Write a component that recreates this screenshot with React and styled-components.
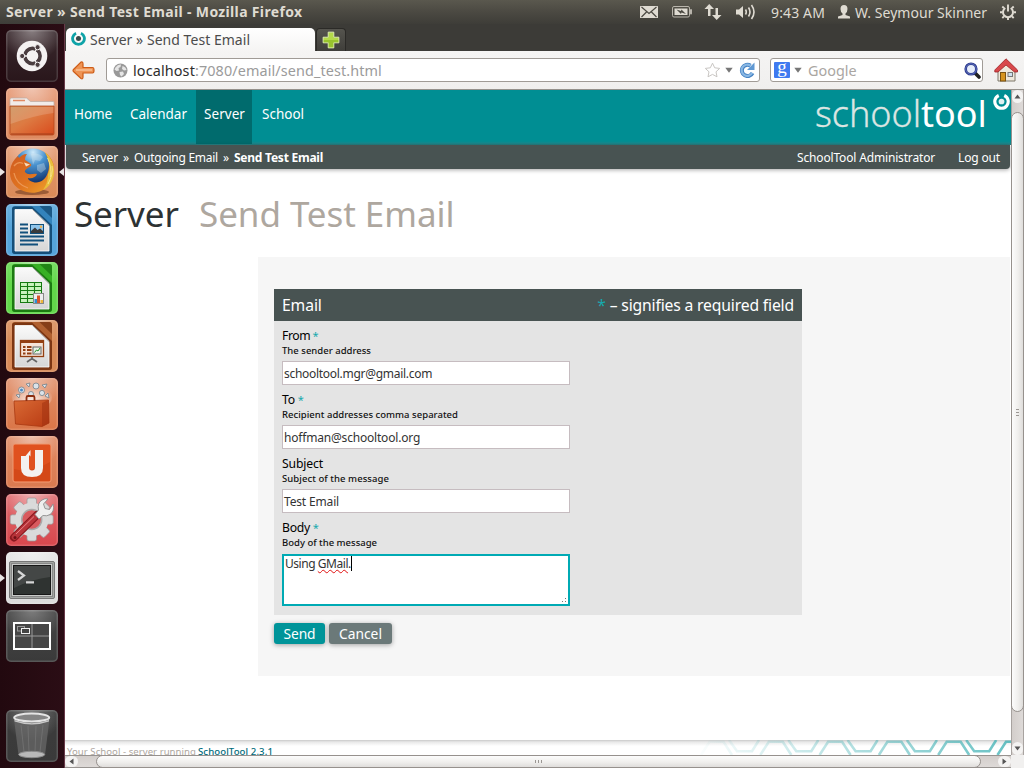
import React from "react";
import styled, { createGlobalStyle, css } from "styled-components";

const Global = createGlobalStyle`
  *, *::before, *::after { box-sizing: border-box; }
  html, body { margin: 0; padding: 0; }
  body { width: 1024px; height: 768px; overflow: hidden; background: #fff; }
  svg { display: block; flex: none; }
`;

const tracked = css`
  letter-spacing: ${(p) => p.$track || 0}px;
  white-space: pre;
`;

const Desktop = styled.div`
  width: 1024px;
  height: 768px;
  display: flex;
  flex-direction: column;
  overflow: hidden;
  background: #250a11;
  font-family: "Noto Sans", "Open Sans", sans-serif;
  font-size: 14px;
`;

/* ---------- Top panel ---------- */
const Panel = styled.header`
  height: 24px;
  flex: none;
  display: flex;
  align-items: center;
  padding: 0 8px 0 6px;
  background: linear-gradient(#5a584e, #4b4942 50%, #3e3d38);
  color: #dfdbd2;
`;
const PanelTitle = styled.span`
  ${tracked}
  flex: 1;
  line-height: 24px;
  font-size: 14px;
  font-weight: 700;
`;
const Indicators = styled.div`
  display: flex;
  align-items: center;
  height: 24px;
`;
const Clock = styled.span`
  ${tracked}
  width: 55px;
  margin-left: 15px;
  font-size: 14px;
`;
const UserName = styled.span`
  ${tracked}
  width: 133px;
  margin: 0 12px 0 4px;
  font-size: 14px;
`;
const Spacer = styled.i`
  width: ${(p) => p.$w}px;
  flex: none;
`;

/* ---------- Launcher ---------- */
const Workspace = styled.div`
  flex: 1;
  display: flex;
  min-height: 0;
`;
const Launcher = styled.nav`
  width: 65px;
  flex: none;
  display: flex;
  flex-direction: column;
  gap: 6px;
  padding: 6px 0 6px 0;
  background: linear-gradient(90deg, #22090f, #2b0d15);
  border-right: 1px solid #683948;
`;
const LauncherItem = styled.div`
  height: 52px;
  display: flex;
  align-items: center;
  margin-top: ${(p) => (p.$last ? "auto" : 0)};
`;
const Pip = styled.i`
  width: 0;
  height: 0;
  border: 4px solid transparent;
  ${(p) =>
    p.$side === "left"
      ? "border-left: 5px solid #e8e4e4; border-right: 0; margin-right: 1px;"
      : "border-right: 5px solid #e8e4e4; border-left: 0; margin-left: 1px;"}
  visibility: ${(p) => (p.$on ? "visible" : "hidden")};
`;

/* ---------- Browser chrome ---------- */
const Browser = styled.main`
  flex: 1;
  min-width: 0;
  display: flex;
  flex-direction: column;
  background: #3c3b37;
`;
const TabStrip = styled.div`
  height: 27px;
  flex: none;
  display: flex;
  align-items: flex-end;
  gap: 1px;
  padding-left: 1px;
`;
const Tab = styled.div`
  width: 249px;
  height: 23px;
  display: flex;
  align-items: center;
  gap: 4px;
  padding-left: 5px;
  border-radius: 5px 5px 0 0;
  background: linear-gradient(#fff, #f5f4f3);
  color: #4c4c4c;
`;
const TabTitle = styled.span`
  ${tracked}
  font-size: 14px;
`;
const TabMark = styled.div`
  height: 18px;
`;
const NewTab = styled.div`
  width: 30px;
  height: 23px;
  display: grid;
  place-items: center;
  border: 1px solid #2b2a27;
  border-bottom: 0;
  border-radius: 4px 4px 0 0;
  background: linear-gradient(#55544e, #3f3e3a);
`;
const Toolbar = styled.div`
  height: 39px;
  flex: none;
  display: flex;
  align-items: center;
  padding: 0 6px 0 7px;
  background: linear-gradient(#f5f4f3, #f0efee);
  border-bottom: 1px solid #95918c;
`;
const Entry = styled.div`
  height: 24px;
  width: ${(p) => p.$w}px;
  display: flex;
  align-items: center;
  border: 1px solid #a09b96;
  border-radius: 3px;
  background: #fff;
  color: #9b9b9b;
  font-size: 14.4px;
`;
const UrlHost = styled.span`
  ${tracked}
  color: #2d2d2d;
`;
const UrlPath = styled.span`
  ${tracked}
  flex: 1;
`;
const Placeholder = styled.span`
  ${tracked}
  flex: 1;
  color: #aaa6a2;
`;

/* ---------- Viewport and scrollbars ---------- */
const Viewport = styled.div`
  flex: 1;
  min-height: 0;
  display: grid;
  grid-template: 665px 13px / 946px 13px;
  background: #f1f0ef;
`;
const VBar = styled.div`
  display: flex;
  flex-direction: column;
  align-items: stretch;
  border: 1px solid #a8a3a0;
  border-top: 0;
  border-bottom: 0;
  background: linear-gradient(90deg, #d3cecb, #dedad8);
`;
const HBar = styled.div`
  display: flex;
  border: 1px solid #979390;
  border-left: 0;
  border-right: 0;
  background: linear-gradient(#d3cecb, #dedad8);
`;
const VThumb = styled.div`
  height: 600px;
  margin: 9px -1px 0;
  display: grid;
  place-items: center;
  border: 1px solid #96918d;
  border-radius: 7px;
  background: linear-gradient(90deg, #fcfcfc, #f0efed 55%, #dfdddb);
`;
const HThumb = styled.div`
  width: 885px;
  margin: -1px 0 -1px 18px;
  display: grid;
  place-items: center;
  border: 1px solid #96918d;
  border-radius: 7px;
  background: linear-gradient(#fcfcfc, #f0efed 55%, #dfdddb);
`;
const Stepper = styled.div`
  width: ${(p) => (p.$v ? "auto" : "13px")};
  height: ${(p) => (p.$v ? "13px" : "auto")};
  margin: ${(p) => (p.$end ? (p.$v ? "auto 0 0" : "0 0 0 auto") : 0)};
  display: grid;
  place-items: center;
  background: #f4f3f2;
  border-radius: 6px;
`;

/* ---------- SchoolTool page ---------- */
const Page = styled.div`
  background: #fff;
  overflow: hidden;
  display: flex;
  flex-direction: column;
`;
const Banner = styled.div`
  height: 55px;
  flex: none;
  display: flex;
  background: linear-gradient(#008e93 0, #008e93 51px, #178a8f 53px, #2b7c80 55px);
  color: #fff;
`;
const NavItem = styled.a`
  width: ${(p) => p.$w}px;
  height: 54px;
  padding: 14px 0 0 ${(p) => p.$pad || 8}px;
  line-height: 20px;
  font-size: 13.5px;
  background: ${(p) => (p.$active ? "#006b6d" : "transparent")};
  ${tracked}
`;
const Brand = styled.div`
  margin-left: auto;
  display: flex;
  font-size: 36px;
  line-height: 48px;
`;
const BrandThin = styled.span`
  ${tracked}
  font-weight: 300;
  color: #dbe5e2;
  -webkit-text-stroke: 0.3px #dbe5e2;
`;
const BrandBold = styled.span`
  ${tracked}
  width: 68px;
  font-weight: 400;
`;
const BrandMark = styled.div`
  padding: 3px 1px 0 4px;
`;
const Crumbs = styled.div`
  height: 24px;
  flex: none;
  margin: 0 1px;
  padding: 0 10px 0 16px;
  display: flex;
  align-items: flex-start;
  border-radius: 0 0 4px 4px;
  background: #485352;
  box-shadow: 0 1px 4px rgba(0, 0, 0, 0.35);
  color: #fff;
  font-size: 12px;
`;
const Crumb = styled.span`
  ${tracked}
  width: ${(p) => p.$w}px;
  flex: none;
  line-height: 25px;
  font-weight: ${(p) => (p.$strong ? 700 : 400)};
  margin-left: ${(p) => (p.$push ? "auto" : 0)};
`;
const Heading = styled.h1`
  height: 88px;
  margin: 0;
  padding: 20px 0 0 9px;
  flex: none;
  display: flex;
  font-size: 35px;
  line-height: 50px;
  font-weight: 400;
`;
const HeadMain = styled.span`
  ${tracked}
  width: 125px;
  color: #2d3233;
`;
const HeadSub = styled.span`
  ${tracked}
  color: #aea79f;
`;
const Content = styled.section`
  height: 419px;
  flex: none;
  margin: 0 1px 0 193px;
  padding: 32px 16px;
  background: #f6f6f6;
`;
const Fieldset = styled.div`
  width: 528px;
  height: 326px;
  background: #e4e4e4;
`;
const Legend = styled.div`
  height: 32px;
  padding: 0 8px;
  display: flex;
  align-items: center;
  justify-content: space-between;
  background: #485352;
  color: #fff;
  font-size: 15.7px;
`;
const LegendText = styled.span`
  ${tracked}
`;
const Star = styled.b`
  font-weight: 400;
  font-size: ${(p) => (p.$small ? "11px" : "inherit")};
  color: #17a9ad;
`;
const Row = styled.div`
  height: 64px;
  padding: 7px 8px 0;
`;
const FieldName = styled.div`
  ${tracked}
  height: 16px;
  line-height: 16px;
  font-size: 12.2px;
  color: #000;
`;
const Hint = styled.div`
  ${tracked}
  height: 13px;
  line-height: 13px;
  font-size: 9.5px;
  font-weight: 500;
  color: #111;
`;
const Input = styled.div`
  width: 288px;
  height: 24px;
  margin-top: 4px;
  padding: 0 1px;
  border: 1px solid #c6bcc0;
  background: #fff;
  line-height: 22px;
  color: #333;
`;
const TextArea = styled.div`
  width: 288px;
  height: 52px;
  margin-top: 5px;
  padding: 0 1px;
  display: flex;
  border: 2px solid #00aab4;
  background: #fff;
  line-height: 16px;
  color: #333;
`;
const Value = styled.span`
  ${tracked}
  font-size: 12px;
`;
const Misspelt = styled.span`
  text-decoration: underline wavy #e01010 1px;
  text-underline-offset: 1px;
  text-decoration-skip-ink: none;
`;
const Caret = styled.i`
  width: 1px;
  height: 15px;
  background: #000;
`;
const Grip = styled.div`
  margin: auto 0 1px auto;
`;
const Buttons = styled.div`
  display: flex;
  gap: 4px;
  padding-top: 8px;
`;
const Button = styled.button`
  ${tracked}
  width: ${(p) => p.$w}px;
  height: 21px;
  padding: 0;
  border: 0;
  border-radius: 3px;
  background: ${(p) => (p.$primary ? "#009499" : "#6b7979")};
  box-shadow: 0 1px 5px rgba(0, 0, 0, 0.35);
  color: #fff;
  font: 400 13.8px/21px "Noto Sans", sans-serif;
`;
const Footer = styled.footer`
  height: 15px;
  flex: none;
  margin-top: auto;
  padding-left: 2px;
  display: flex;
  justify-content: space-between;
  overflow: hidden;
  background: linear-gradient(#c9c9c9, #e9e9e9 2px, #fff 6px);
  font-size: 9.6px;
  line-height: 24px;
  color: #aea79f;
`;
const FooterText = styled.span`
  ${tracked}
  width: 131px;
`;
const FooterLink = styled.a`
  ${tracked}
  flex: 1;
  color: #006b7c;
  font-weight: 500;
`;

/* ---------- Icons ---------- */
const Ring = ({ size, color, dot }) => (
  <svg width={size} height={size} viewBox="0 0 16 16">
    <path d="M5.400 2.300A6.300 6.300 0 1 0 10.600 2.300" fill="none" stroke={color} strokeWidth="3" />
    <circle cx="8" cy="8" r="2.700" fill={dot} />
  </svg>
);

const Tile = ({ id, from, to, glow = 0.45, children }) => (
  <svg width="52" height="52" viewBox="0 0 52 52">
    <defs>
      <linearGradient id={`t-${id}`} x1="0" y1="0" x2="0" y2="1">
        <stop offset="0" stopColor={from} />
        <stop offset="1" stopColor={to} />
      </linearGradient>
      <radialGradient id={`g-${id}`} cx=".5" cy="0" r=".6">
        <stop offset="0" stopColor="#fff" stopOpacity={glow} />
        <stop offset="1" stopColor="#fff" stopOpacity="0" />
      </radialGradient>
    </defs>
    <rect width="52" height="52" rx="5" fill={`url(#t-${id})`} />
    <rect width="52" height="52" rx="5" fill={`url(#g-${id})`} />
    <rect x=".75" y=".75" width="50.5" height="50.5" rx="4.5" fill="none" stroke="#fff" strokeOpacity=".15" strokeWidth="1.500" />
    {children}
  </svg>
);

const DashIcon = () => (
  <Tile id="dash" from="#3a2a2e" to="#29161b" glow={0.4}>
    <circle cx="26" cy="26" r="15.300" fill="#f4f2f2" />
    <circle cx="26.500" cy="26" r="7.600" fill="none" stroke="#4a3d40" strokeWidth="3.600" />
    <g stroke="#f4f2f2" strokeWidth="1.300">
      <path d="M26.500 26 16 26M26.500 26 31.700 17M26.500 26 31.700 35" />
    </g>
    <circle cx="26.500" cy="26" r="5.400" fill="#f4f2f2" />
    <g fill="#4a3d40" stroke="#f4f2f2" strokeWidth="1">
      <circle cx="16.200" cy="26" r="2.600" />
      <circle cx="31.600" cy="17.200" r="2.600" />
      <circle cx="31.600" cy="34.800" r="2.600" />
    </g>
  </Tile>
);

const FilesIcon = () => (
  <Tile id="files" from="#e59672" to="#de8a60">
    <defs>
      <linearGradient id="fold" x1="0" y1="0" x2="1" y2="1">
        <stop offset="0" stopColor="#c98b52" />
        <stop offset=".45" stopColor="#dd7a42" />
        <stop offset="1" stopColor="#d94a1c" />
      </linearGradient>
    </defs>
    <path d="M4 19V11.500Q4 10 5.500 10H20.500L24.500 13.500H47Q48 13.500 48 14.500V19Z" fill="#f1ece9" stroke="#b9aaa3" strokeWidth=".7" />
    <path d="M7 12.500H19" stroke="#e08a63" strokeWidth="1.500" />
    <path d="M4 18H48V45.500Q48 47 46.500 47H5.500Q4 47 4 45.500Z" fill="url(#fold)" stroke="#b4481d" strokeWidth=".8" />
    <path d="M4.500 19H47.500V25Q26 28 4.500 36Z" fill="#fff" opacity=".16" />
    <path d="M5 46H47" stroke="#a53f1a" />
  </Tile>
);

const FirefoxIcon = () => (
  <Tile id="ff" from="#e59a72" to="#d98a58">
    <defs>
      <radialGradient id="globe" cx=".5" cy=".1" r=".8">
        <stop offset="0" stopColor="#cfeafa" />
        <stop offset=".4" stopColor="#4a93cf" />
        <stop offset="1" stopColor="#0e2f6b" />
      </radialGradient>
      <linearGradient id="fox" x1="0" y1="0" x2="1" y2="1">
        <stop offset="0" stopColor="#cf5a20" />
        <stop offset=".55" stopColor="#e07420" />
        <stop offset="1" stopColor="#f0a82e" />
      </linearGradient>
    </defs>
    <ellipse cx="26" cy="46" rx="17" ry="3" fill="#5c2c12" opacity=".5" />
    <circle cx="27" cy="22" r="19.500" fill="url(#globe)" />
    <path d="M25 8Q32 6 37 11L34 15 29 14 27 19ZM31 19 38 17 40 23 35 27 31 24Z" fill="#dcebf2" opacity=".35" />
    <path d="M12 10C3 17 2 30 7 37C13 46 26 49 35 45C45 41 50 30 47.500 18C46 13 43 9 39 7C43 12 44 20 42 26C40 34 33 38 27 36C23 35 22 33 22 32C26 33 30 31 31 28C27 27 22 30 19 26C18 24 22 22 25 20C26 18 24 17 19 14C19 11 20 9 21 8C17 8 15 10 13 12Z" fill="url(#fox)" />
    <path d="M39 6Q50.500 16 47.500 31Q45 40 37 44Q42 37 42 28Q44 24 43 17Q42 11 39 6Z" fill="#e9bf3c" />
    <path d="M41.500 12Q46 20 44.500 31M46 20Q47.500 28 42 38" fill="none" stroke="#f8e78c" strokeWidth=".9" />
    <path d="M8 20Q12 15 17 17.500M8 27Q10 38 22 42" stroke="#f0a060" strokeWidth="1.300" fill="none" opacity=".8" />
    <path d="M18 16.500 24 18.500 20 20.500Z" fill="#f6dcc0" />
  </Tile>
);

const OfficeIcon = ({ id, light, mid, dark, children }) => (
  <Tile id={id} from={light} to={light}>
    <defs>
      <linearGradient id={`paper-${id}`} x1="0" y1="0" x2="0" y2="1">
        <stop offset="0" stopColor="#fafafa" />
        <stop offset="1" stopColor="#d6d6d6" />
      </linearGradient>
    </defs>
    <rect x="6" y="2" width="40" height="48" rx="3" fill={mid} />
    <path d="M9 2.500H26L46 21V47Q46 50 43 50H9Q6 50 6 47V5.500Q6 2.500 9 2.500Z" fill={dark} />
    <path d="M33.500 2H43.500Q46 2 46 4.500V14Z" fill={dark} opacity=".8" />
    <path d="M9 5.500H26.500L43 21.500V47H9Z" fill={`url(#paper-${id})`} stroke="#fff" strokeWidth=".8" />
    <path d="M26.500 5.500 43 21.500" stroke="#999" strokeWidth=".8" />
    {children}
  </Tile>
);

const WriterIcon = () => (
  <OfficeIcon id="wr" light="#55a4da" mid="#3383bc" dark="#154e78">
    <path d="M14 20.500H22M14 24.500H22M14 28.500H22M14 32.500H38M14 36.500H38M14 40.500H32" stroke="#12507c" strokeWidth="1.800" />
    <rect x="24.500" y="20.500" width="13" height="9" fill="#8fc4ea" stroke="#12507c" />
    <path d="M25 29V27L29 23.500 31.500 26 34 24.500 37 27V29Z" fill="#3a3a3a" />
    <circle cx="35" cy="22.800" r="1.200" fill="#f2b14a" />
  </OfficeIcon>
);
const CalcIcon = () => (
  <OfficeIcon id="ca" light="#62d84a" mid="#37b024" dark="#1c7a12">
    <rect x="14.500" y="20.500" width="21" height="20" fill="#c9f2bd" stroke="#167a12" />
    <path d="M14.500 24.500H35.500M14.500 28.500H35.500M14.500 32.500H35.500M14.500 36.500H35.500M21.500 20.500V40.500M28.500 20.500V40.500" stroke="#167a12" strokeWidth="1.100" />
    <rect x="27.500" y="31.500" width="10" height="10" fill="#eee" stroke="#888" />
    <path d="M28.500 37H31V41H28.500Z" fill="#2f8fd0" />
    <path d="M31 33.500H34V41H31Z" fill="#d8552c" />
    <path d="M34.500 38H37V41H34.500Z" fill="#efb73a" />
  </OfficeIcon>
);
const ImpressIcon = () => (
  <OfficeIcon id="im" light="#d88a57" mid="#b06030" dark="#7c3613">
    <rect x="14.500" y="20.500" width="23" height="16" fill="#f6e4d8" stroke="#933f12" strokeWidth="1.300" />
    <path d="M14 22H38" stroke="#933f12" strokeWidth="2" />
    <path d="M17 27H19.500M17 30H19.500M17 33.500H19.500M21 27H25.500M21 30H25.500M21 33.500H25.500" stroke="#933f12" strokeWidth="1.900" />
    <rect x="27" y="27" width="8" height="7" fill="#e9f2e6" stroke="#666" />
    <path d="M28.500 32.500 30.500 30 32 31 34 28" fill="none" stroke="#25902d" />
    <path d="M26 37V39M21 42 26 38.500 31 42" fill="none" stroke="#666" strokeWidth="1.800" />
  </OfficeIcon>
);

const SoftwareIcon = () => (
  <Tile id="sw" from="#e08f6a" to="#da7648">
    <defs>
      <radialGradient id="burst" cx=".5" cy=".7" r=".6">
        <stop offset="0" stopColor="#fff" stopOpacity=".95" />
        <stop offset="1" stopColor="#fff" stopOpacity="0" />
      </radialGradient>
      <linearGradient id="bag" x1="0" y1="0" x2="1" y2="1">
        <stop offset="0" stopColor="#d96a35" />
        <stop offset="1" stopColor="#b83a12" />
      </linearGradient>
    </defs>
    <ellipse cx="26" cy="19" rx="20" ry="13" fill="url(#burst)" />
    <g fill="#dbe3ea" stroke="#74818c" strokeWidth=".8">
      <circle cx="15.500" cy="12" r="3" />
      <circle cx="30" cy="8" r="3" />
      <circle cx="36" cy="15" r="2.600" />
      <circle cx="25" cy="16" r="2.500" />
      <path d="M20 6 24 5 23 9ZM36 7 41 6 39 10ZM10 17 14 16 13 20ZM39 18 42 15 43 20Z" />
    </g>
    <circle cx="15.500" cy="12" r="1.500" fill="#4b8bc4" />
    <path d="M8 23 42.500 22 43 45 36 48.500 9.500 46Z" fill="url(#bag)" stroke="#a83812" strokeWidth=".8" />
    <path d="M36 25V48.500L43 45 42.500 22Z" fill="#9d3010" opacity=".5" />
    <path d="M20.500 23V19.500Q20.500 18 22 18H27Q28.500 18 28.500 19.500V23" fill="none" stroke="#8d2e10" strokeWidth="1.800" />
  </Tile>
);

const UbuntuOneIcon = () => (
  <Tile id="u1" from="#e08a64" to="#da7a50">
    <rect x="7" y="8" width="38" height="38" rx="2" fill="#e0511f" stroke="#ef9a73" />
    <path d="M8 33Q24 38 44 26V45H8Z" fill="#c83f12" opacity=".5" />
    <path d="M24.500 14V20.500L23 19V31.500Q23 34.500 26 34.500Q29 34.500 29 31.500V14H37V32Q37 41 26 41Q15 41 15 32V20H19.500Z" fill="#f3f1f0" />
  </Tile>
);

const SettingsIcon = () => (
  <Tile id="set" from="#df6a6e" to="#d8474d">
    <g fill="#d9d9d9" stroke="#989898" strokeWidth=".7">
      {[0, 45, 90, 135].map((a) => (
        <rect key={a} x="21" y="4" width="9.500" height="43" rx="2" transform={`rotate(${a} 25.700 25.500)`} />
      ))}
    </g>
    <circle cx="25.700" cy="25.500" r="16.800" fill="#dadada" />
    <circle cx="25.700" cy="25.500" r="10" fill="#d85a5e" stroke="#aaa" strokeWidth="1.500" />
    <path d="M8 43.500 31 21" stroke="#8b1a20" strokeWidth="8" strokeLinecap="round" />
    <path d="M8.500 43 31 21" stroke="#b8343a" strokeWidth="5.500" strokeLinecap="round" />
    <path d="M10 40 28 22.500" stroke="#e98286" strokeWidth="1" />
    <path d="M29 20.500 32.500 16Q31 9 36 6Q39 4 42 5L37.500 10 39 14.500 43.500 15.500 47 10Q49 17 44 20.500Q41 22.500 37 21.500L33 25Z" fill="#efefef" stroke="#8c8c8c" strokeWidth=".9" />
    <circle cx="9" cy="43.500" r="1.500" fill="#6f1116" />
  </Tile>
);

const TerminalIcon = () => (
  <Tile id="term" from="#e4e4e4" to="#dcdcdc">
    <rect x="3.500" y="9.500" width="45" height="37" rx="1.500" fill="#a4a6a3" stroke="#777" />
    <rect x="5.500" y="11.500" width="41" height="33" fill="#c9cac8" stroke="#888" />
    <rect x="7.500" y="13.500" width="37" height="29" fill="#2f3331" stroke="#171717" />
    <path d="M8 14H44V25Q26 27 8 36Z" fill="#fff" opacity=".1" />
    <path d="M12 19 18 23.500 12 28M20 30.300H28" fill="none" stroke="#d6d6d6" strokeWidth="2.200" />
  </Tile>
);

const SwitcherIcon = () => (
  <Tile id="wsw" from="#464646" to="#3a3a3a" glow={0.3}>
    <rect x="8" y="13" width="36" height="26" fill="#464646" stroke="#fff" strokeWidth="2" />
    <path d="M26 14V38M9 26H43" stroke="#999" strokeWidth="1" />
    <rect x="11.500" y="16.500" width="7" height="4.500" fill="none" stroke="#999" />
    <rect x="15.500" y="18.500" width="8" height="5" fill="#444" stroke="#eee" />
  </Tile>
);

const TrashIcon = () => (
  <Tile id="bin" from="#3c3c3c" to="#3a3a3a" glow={0.3}>
    <path d="M8 9 12.500 45Q26 50 39 45L43.500 9Z" fill="#686868" opacity=".75" />
    <path d="M15 15 18 42M22 16 23 42M30 16 29 42M37 15 34 42" stroke="#8a8a8a" strokeWidth="1" opacity=".4" />
    <ellipse cx="25.700" cy="44.500" rx="13" ry="3.200" fill="#b9b9b9" stroke="#8a8a8a" />
    <ellipse cx="25.700" cy="7.500" rx="17.500" ry="4" fill="#858585" stroke="#e4e4e4" strokeWidth="2" />
    <path d="M8.500 10Q26 16.500 43 10V11.500Q26 17.500 8.500 11.500Z" fill="#c9c9c9" />
  </Tile>
);

const MailIcon = () => (
  <svg width="18" height="12" viewBox="0 0 18 12">
    <rect width="18" height="12" rx=".5" fill="#dfdbd2" />
    <path d="M1.500 1 9 7.500 16.500 1M1.500 11 6.500 6M16.500 11 11.500 6" fill="none" stroke="#4a4841" strokeWidth="1.200" />
  </svg>
);
const BatteryIcon = () => (
  <svg width="20" height="12" viewBox="0 0 20 12">
    <rect x=".5" y=".5" width="17" height="10.500" rx="1.500" fill="none" stroke="#b9b5ac" />
    <rect x="2.500" y="2.500" width="13" height="6.500" fill="#dfdbd2" />
    <rect x="18" y="3" width="2" height="5.500" rx="1" fill="#b9b5ac" />
    <path d="M4.500 3.500 9 5 9.500 3.500 14 8 9.500 6.500 9 8Z" fill="#4a4841" />
  </svg>
);
const NetworkIcon = () => (
  <svg width="18" height="16" viewBox="0 0 18 16">
    <path d="M5.200 0 10 5H6.500V12H4V5H.5ZM12.700 16 8 11H11.500V4H14V11H17.500Z" fill="#dfdbd2" />
  </svg>
);
const SoundIcon = () => (
  <svg width="20" height="16" viewBox="0 0 20 16">
    <path d="M0 5.500H3L7 2V14L3 10.500H0Z" fill="#dfdbd2" />
    <path d="M9.500 5.500Q11 8 9.500 10.500M12.500 3.500Q15.500 8 12.500 12.500M15.500 1Q20.500 8 15.500 15" fill="none" stroke="#dfdbd2" strokeWidth="1.600" />
  </svg>
);
const PersonIcon = () => (
  <svg width="14" height="14" viewBox="0 0 14 14">
    <path d="M7 0Q10.500 0 10.500 4Q10.500 7 8.500 8.500V10L13 11.500V13.500H1V11.500L5.500 10V8.500Q3.500 7 3.500 4Q3.500 0 7 0Z" fill="#dfdbd2" />
  </svg>
);
const PowerIcon = () => (
  <svg width="16" height="16" viewBox="0 0 16 16">
    <path d="M5.300 4A5 5 0 1 0 10.700 4" fill="none" stroke="#dfdbd2" strokeWidth="2" />
    <path d="M8 .5V7.500M0 8.300H2.500M13.500 8.300H16M2.300 14 4 12.300M13.700 14 12 12.300M2.300 2.500 4 4.200M13.700 2.500 12 4.200M8 13.500V16" stroke="#dfdbd2" strokeWidth="1.900" />
  </svg>
);
const PlusIcon = () => (
  <svg width="18" height="18" viewBox="0 0 16 16">
    <path d="M5.500 1H10.500V5.500H15V10.500H10.500V15H5.500V10.500H1V5.500H5.500Z" fill="#b4d94a" stroke="#e4f2b8" strokeWidth=".8" />
    <path d="M6 10H1.500V8H14.500V10H10V14.500H6Z" fill="#86b41c" opacity=".6" />
  </svg>
);
const BackIcon = () => (
  <svg width="23" height="19" viewBox="0 0 23 19">
    <path d="M9 1Q11 .5 11 3V6.500H20.500Q22 6.500 22 9.300Q22 12 20.500 12H11V16Q11 18.500 9 17.500L1.500 10.500Q.6 9.500 1.500 8.500Z" fill="#ee9455" stroke="#ce5c17" strokeWidth="1.200" />
    <path d="M4 9H20" stroke="#f9c79f" strokeWidth="1.300" />
  </svg>
);
const GlobeIcon = () => (
  <svg width="15" height="15" viewBox="0 0 15 15">
    <circle cx="7.500" cy="7.500" r="7" fill="#999" />
    <path d="M2.500 4.500Q5 1 8 1.500L7.500 4 5.500 5 6 7.500 3.500 8 1.500 6.500ZM9.500 3Q13 4 13.500 7L11 7.500 9 6ZM6.500 9 10 8.500 11 11 8.500 13.500 7 12Z" fill="#e5e5e5" />
  </svg>
);
const StarIcon = () => (
  <svg width="17" height="16" viewBox="0 0 17 16">
    <path d="M8.500 1.200 10.700 5.800 15.700 6.400 12 9.800 13 14.800 8.500 12.400 4 14.800 5 9.800 1.300 6.400 6.300 5.800Z" fill="#fff" stroke="#c9c6c3" />
  </svg>
);
const DropIcon = () => (
  <svg width="8" height="6" viewBox="0 0 8 6">
    <path d="M.3.800H7.700L4 5.800Z" fill="#777" />
  </svg>
);
const ReloadIcon = () => (
  <svg width="16" height="16" viewBox="0 0 16 16">
    <path d="M13.500 11A5.600 5.600 0 1 1 11.500 3.700" fill="none" stroke="#4683c4" strokeWidth="4" />
    <path d="M13.200 10.800A5.600 5.600 0 1 1 11.500 3.700" fill="none" stroke="#8ab8e4" strokeWidth="2.200" />
    <path d="M15.500.5V8H8Z" fill="#5f98d3" />
  </svg>
);
const GoogleG = styled.span`
  width: 16px;
  height: 16px;
  border-radius: 1px;
  background: #3f7af0;
  color: #fff;
  font: 400 19px/10px "Liberation Serif", serif;
  text-align: center;
`;
const MagnifierIcon = () => (
  <svg width="17" height="17" viewBox="0 0 17 17">
    <path d="M10.500 10.500 15 15" stroke="#222" strokeWidth="3.600" strokeLinecap="round" />
    <circle cx="7" cy="7" r="5.300" fill="#e6edfa" stroke="#2b3a8c" strokeWidth="2.600" />
    <circle cx="7" cy="7" r="5.300" fill="none" stroke="#6f80cc" strokeWidth=".7" />
  </svg>
);
const HomeIcon = () => (
  <svg width="24" height="24" viewBox="0 0 24 24">
    <path d="M4 12V23H21V12L12.500 4Z" fill="#efe9dc" stroke="#7d766a" />
    <path d="M12 .8 .8 12V14H4L12 7 20.500 14H23.500V12Z" fill="#d9484b" stroke="#9c2326" strokeWidth=".8" />
    <rect x="6.500" y="14.500" width="5" height="8.500" fill="#d6941f" stroke="#7a5312" />
    <rect x="14" y="14.500" width="4.500" height="4" fill="#cfe0ee" stroke="#777" />
  </svg>
);
const Arrow = ({ turn }) => (
  <svg width="7" height="7" viewBox="0 0 7 7">
    <path d="M.5 5.500 3.500 1.500 6.500 5.500Z" fill="#555" transform={`rotate(${turn} 3.500 3.500)`} />
  </svg>
);
const Ridges = ({ turn }) => (
  <svg width="9" height="9" viewBox="0 0 9 9">
    <path d="M3 1.500H6M3 4.500H6M3 7.500H6" stroke="#9b9793" transform={`rotate(${turn} 4.500 4.500)`} />
  </svg>
);
const GripIcon = () => (
  <svg width="6" height="6" viewBox="0 0 6 6">
    <path d="M1 4.500H2M4 1.500H5M4 4.500H5" stroke="#777" />
  </svg>
);

const hexRow = [0, 1, 2, 3, 4, 5]
  .map((i) => 10 + i * 59.3)
  .map((x) => `M${x} 15L${x + 8.5} 1.700H${x + 22.5}L${x + 31} 15M${x + 28} 0L${x + 36} 11.300H${x + 51}L${x + 58} 0`)
  .join("");
const FooterPattern = () => (
  <svg width="320" height="15" viewBox="0 0 320 15">
    <defs>
      <linearGradient id="fade" gradientUnits="userSpaceOnUse" x1="0" y1="0" x2="320" y2="0">
        <stop offset="0" stopColor="#35adb0" stopOpacity="0" />
        <stop offset="1" stopColor="#35adb0" stopOpacity=".75" />
      </linearGradient>
    </defs>
    <path d={hexRow} fill="none" stroke="url(#fade)" strokeWidth="2.600" />
  </svg>
);

const launcher = [
  { id: "dash", Icon: DashIcon },
  { id: "files", Icon: FilesIcon },
  { id: "firefox", Icon: FirefoxIcon, running: true, focused: true },
  { id: "writer", Icon: WriterIcon },
  { id: "calc", Icon: CalcIcon },
  { id: "impress", Icon: ImpressIcon },
  { id: "software", Icon: SoftwareIcon },
  { id: "one", Icon: UbuntuOneIcon },
  { id: "settings", Icon: SettingsIcon },
  { id: "terminal", Icon: TerminalIcon, running: true },
  { id: "switcher", Icon: SwitcherIcon },
  { id: "trash", Icon: TrashIcon, last: true },
];

const fields = [
  { name: "From", required: true, hint: "The sender address", value: "schooltool.mgr@gmail.com", track: [-0.45, 0.01, -0.29] },
  { name: "To", required: true, hint: "Recipient addresses comma separated", value: "hoffman@schooltool.org", track: [-0.1, 0.03, -0.19] },
  { name: "Subject", hint: "Subject of the message", value: "Test Email", track: [-0.14, 0.07, -0.16] },
];

export default function App() {
  return (
    <>
      <Global />
      <Desktop>
        <Panel>
          <PanelTitle $track={0.34}>Server » Send Test Email - Mozilla Firefox</PanelTitle>
          <Indicators>
            <MailIcon />
            <Spacer $w={14} />
            <BatteryIcon />
            <Spacer $w={12} />
            <NetworkIcon />
            <Spacer $w={14} />
            <SoundIcon />
            <Clock $track={0.13}>9:43 AM</Clock>
            <Spacer $w={11} />
            <PersonIcon />
            <UserName $track={0.03}>W. Seymour Skinner</UserName>
            <PowerIcon />
          </Indicators>
        </Panel>
        <Workspace>
          <Launcher>
            {launcher.map(({ id, Icon, running, focused, last }) => (
              <LauncherItem key={id} $last={last}>
                <Pip $side="left" $on={running} />
                <Icon />
                <Pip $side="right" $on={focused} />
              </LauncherItem>
            ))}
          </Launcher>
          <Browser>
            <TabStrip>
              <Tab>
                <TabMark>
                  <Ring size={15} color="#0fa3a8" dot="#3b4a4a" />
                </TabMark>
                <TabTitle $track={0.04}>Server » Send Test Email</TabTitle>
              </Tab>
              <NewTab>
                <PlusIcon />
              </NewTab>
            </TabStrip>
            <Toolbar>
              <BackIcon />
              <Spacer $w={11} />
              <Entry $w={654}>
                <Spacer $w={6} />
                <GlobeIcon />
                <Spacer $w={5} />
                <UrlHost $track={0.13}>localhost</UrlHost>
                <UrlPath $track={0.1}>:7080/email/send_test.html</UrlPath>
                <StarIcon />
                <Spacer $w={4} />
                <DropIcon />
                <Spacer $w={6} />
                <ReloadIcon />
                <Spacer $w={4} />
              </Entry>
              <Spacer $w={10} />
              <Entry $w={213}>
                <Spacer $w={3} />
                <GoogleG>g</GoogleG>
                <Spacer $w={4} />
                <DropIcon />
                <Spacer $w={6} />
                <Placeholder>Google</Placeholder>
                <MagnifierIcon />
                <Spacer $w={1} />
              </Entry>
              <Spacer $w={11} />
              <HomeIcon />
            </Toolbar>
            <Viewport>
              <Page>
                <Banner>
                  <NavItem $w={57} $pad={9} $track={-0.11}>Home</NavItem>
                  <NavItem $w={74}>Calendar</NavItem>
                  <NavItem $w={56} $track={0.06} $active>Server</NavItem>
                  <NavItem $w={60} $pad={10}>School</NavItem>
                  <Brand>
                    <BrandThin $track={-0.06}>school</BrandThin>
                    <BrandBold>tool</BrandBold>
                    <BrandMark>
                      <Ring size={17} color="#fff" dot="#dff0f0" />
                    </BrandMark>
                  </Brand>
                </Banner>
                <Crumbs>
                  <Crumb $w={41}>Server</Crumb>
                  <Crumb $w={11}>»</Crumb>
                  <Crumb $w={89} $track={-0.26}>Outgoing Email</Crumb>
                  <Crumb $w={11}>»</Crumb>
                  <Crumb $w={90} $track={-0.24} $strong>Send Test Email</Crumb>
                  <Crumb $w={161} $track={-0.16} $push>SchoolTool Administrator</Crumb>
                  <Crumb $w={42} $track={-0.15}>Log out</Crumb>
                </Crumbs>
                <Heading>
                  <HeadMain $track={-0.1}>Server</HeadMain>
                  <HeadSub $track={-0.06}>Send Test Email</HeadSub>
                </Heading>
                <Content>
                  <Fieldset>
                    <Legend>
                      <LegendText $track={-0.1}>Email</LegendText>
                      <LegendText $track={-0.16}>
                        <Star>*</Star> – signifies a required field
                      </LegendText>
                    </Legend>
                    {fields.map((f) => (
                      <Row key={f.name}>
                        <FieldName $track={f.track[0]}>
                          {f.name}
                          {f.required && <Star $small> *</Star>}
                        </FieldName>
                        <Hint $track={f.track[1]}>{f.hint}</Hint>
                        <Input>
                          <Value $track={f.track[2]}>{f.value}</Value>
                        </Input>
                      </Row>
                    ))}
                    <Row>
                      <FieldName $track={-0.25}>
                        Body<Star $small> *</Star>
                      </FieldName>
                      <Hint>Body of the message</Hint>
                      <TextArea>
                        <Value $track={-0.46}>
                          Using <Misspelt>GMail</Misspelt>.
                        </Value>
                        <Caret />
                        <Grip>
                          <GripIcon />
                        </Grip>
                      </TextArea>
                    </Row>
                  </Fieldset>
                  <Buttons>
                    <Button $w={51} $track={-0.15} $primary>Send</Button>
                    <Button $w={63}>Cancel</Button>
                  </Buttons>
                </Content>
                <Footer>
                  <FooterText $track={0.04}>Your School - server running</FooterText>
                  <FooterLink $track={0.09}>SchoolTool 2.3.1</FooterLink>
                  <FooterPattern />
                </Footer>
              </Page>
              <VBar>
                <Stepper $v><Arrow turn={0} /></Stepper>
                <VThumb><Ridges turn={0} /></VThumb>
                <Stepper $v $end><Arrow turn={180} /></Stepper>
              </VBar>
              <HBar>
                <Stepper><Arrow turn={-90} /></Stepper>
                <HThumb><Ridges turn={90} /></HThumb>
                <Stepper $end><Arrow turn={90} /></Stepper>
              </HBar>
            </Viewport>
          </Browser>
        </Workspace>
      </Desktop>
    </>
  );
}
